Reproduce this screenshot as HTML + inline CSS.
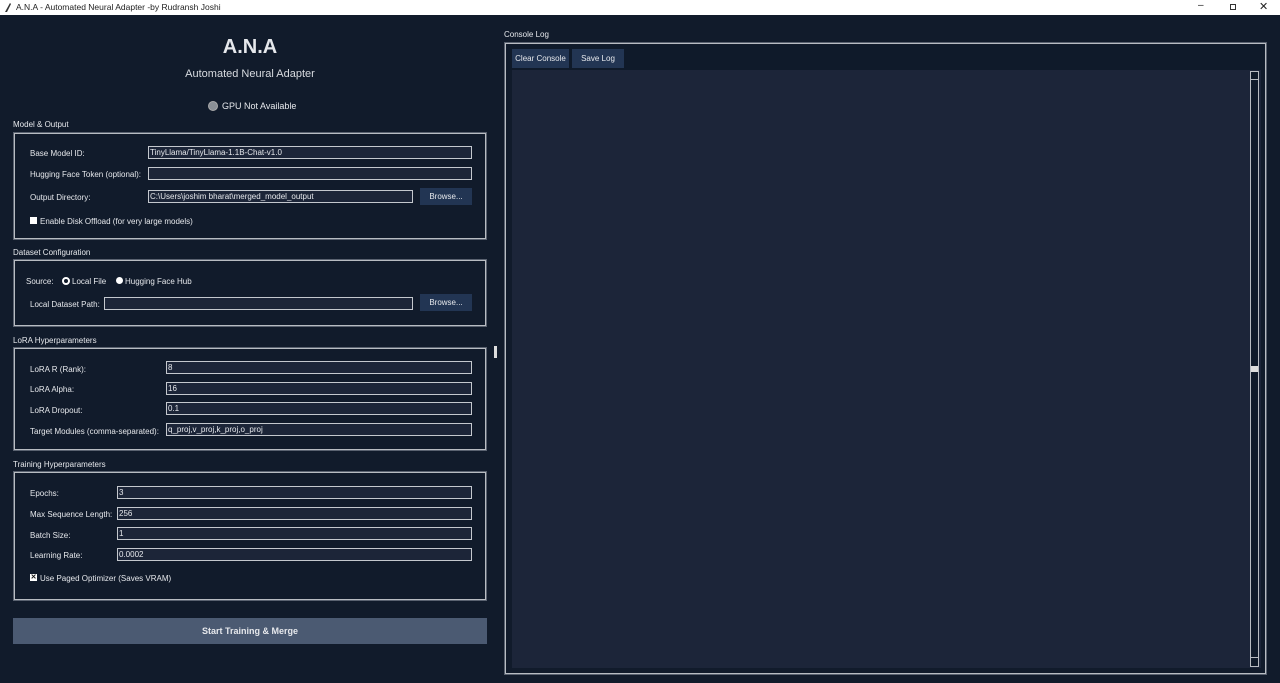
<!DOCTYPE html>
<html><head><meta charset="utf-8"><style>
*{margin:0;padding:0;box-sizing:border-box}
body{width:1280px;height:683px;background:#111b2b;font-family:"Liberation Sans",sans-serif;color:#e6e8ec;position:relative;overflow:hidden;font-size:8.5px}
.a{position:absolute;white-space:nowrap}
.tb{left:0;top:0;width:1280px;height:15px;background:#fff;color:#222;font-size:8.5px}
.fr{position:absolute;border:2px solid #b8bcc2;outline:1px solid #5a6270;outline-offset:-1px}
.en{position:absolute;height:13px;background:#1c2538;border:1.5px solid #c4c8ce;font-size:8px;line-height:11px;padding-left:1px;color:#e6e8ec;white-space:nowrap}
.bt{position:absolute;background:#223553;color:#e6e8ec;text-align:center;font-size:8px}
.lb{position:absolute;white-space:nowrap;font-size:8px}
.hd{position:absolute;white-space:nowrap;font-size:8px}
</style></head><body>
<div class="a tb"><svg style="position:absolute;left:4px;top:2px" width="8" height="11" viewBox="0 0 8 11"><path d="M1 10 L6 1 L7 2 L3 10 Z" fill="#333"/></svg><span style="position:absolute;left:16px;top:2px">A.N.A - Automated Neural Adapter -by Rudransh Joshi</span>
<span style="position:absolute;left:1198px;top:0px;font-size:10px">–</span>
<div style="position:absolute;left:1230px;top:4px;width:6px;height:6px;border:1px solid #333"></div>
<span style="position:absolute;left:1259px;top:0px;font-size:11px">✕</span></div>

<div class="a" style="left:0;width:500px;top:36px;text-align:center;font-size:20px;font-weight:bold">A.N.A</div>
<div class="a" style="left:0;width:500px;top:68px;text-align:center;font-size:11px;color:#d8dbe0">Automated Neural Adapter</div>
<div class="a" style="left:208px;top:101px;width:10px;height:10px;border-radius:50%;background:#8a8f96;border:1px solid #aaa"></div>
<div class="lb" style="left:222px;top:101px;font-size:9px">GPU Not Available</div>

<div class="hd" style="left:13px;top:120px">Model &amp; Output</div>
<div class="fr" style="left:13px;top:132px;width:474px;height:108px"></div>
<div class="lb" style="left:30px;top:149px">Base Model ID:</div>
<div class="en" style="left:148px;top:146px;width:324px">TinyLlama/TinyLlama-1.1B-Chat-v1.0</div>
<div class="lb" style="left:30px;top:170px">Hugging Face Token (optional):</div>
<div class="en" style="left:148px;top:167px;width:324px"></div>
<div class="lb" style="left:30px;top:193px">Output Directory:</div>
<div class="en" style="left:148px;top:190px;width:265px">C:\Users\joshim bharat\merged_model_output</div>
<div class="bt" style="left:420px;top:188px;width:52px;height:17px;line-height:17px">Browse...</div>
<div class="a" style="left:30px;top:217px;width:7px;height:7px;background:#fff"></div>
<div class="lb" style="left:40px;top:217px">Enable Disk Offload (for very large models)</div>

<div class="hd" style="left:13px;top:248px">Dataset Configuration</div>
<div class="fr" style="left:13px;top:259px;width:474px;height:68px"></div>
<div class="lb" style="left:26px;top:277px">Source:</div>
<div class="a" style="left:62px;top:277px;width:8px;height:8px;border-radius:50%;border:2px solid #fff;background:#111b2b"></div>
<div class="lb" style="left:72px;top:277px">Local File</div>
<div class="a" style="left:116px;top:277px;width:7px;height:7px;border-radius:50%;background:#fff"></div>
<div class="lb" style="left:125px;top:277px">Hugging Face Hub</div>
<div class="lb" style="left:30px;top:300px">Local Dataset Path:</div>
<div class="en" style="left:104px;top:297px;width:309px"></div>
<div class="bt" style="left:420px;top:294px;width:52px;height:17px;line-height:17px">Browse...</div>

<div class="hd" style="left:13px;top:336px">LoRA Hyperparameters</div>
<div class="fr" style="left:13px;top:347px;width:474px;height:104px"></div>
<div class="a" style="left:494px;top:346px;width:3px;height:12px;background:#ddd"></div>
<div class="lb" style="left:30px;top:365px">LoRA R (Rank):</div>
<div class="en" style="left:166px;top:361px;width:306px">8</div>
<div class="lb" style="left:30px;top:385px">LoRA Alpha:</div>
<div class="en" style="left:166px;top:382px;width:306px">16</div>
<div class="lb" style="left:30px;top:406px">LoRA Dropout:</div>
<div class="en" style="left:166px;top:402px;width:306px">0.1</div>
<div class="lb" style="left:30px;top:427px">Target Modules (comma-separated):</div>
<div class="en" style="left:166px;top:423px;width:306px">q_proj,v_proj,k_proj,o_proj</div>

<div class="hd" style="left:13px;top:460px">Training Hyperparameters</div>
<div class="fr" style="left:13px;top:471px;width:474px;height:130px"></div>
<div class="lb" style="left:30px;top:489px">Epochs:</div>
<div class="en" style="left:117px;top:486px;width:355px">3</div>
<div class="lb" style="left:30px;top:510px">Max Sequence Length:</div>
<div class="en" style="left:117px;top:507px;width:355px">256</div>
<div class="lb" style="left:30px;top:531px">Batch Size:</div>
<div class="en" style="left:117px;top:527px;width:355px">1</div>
<div class="lb" style="left:30px;top:551px">Learning Rate:</div>
<div class="en" style="left:117px;top:548px;width:355px">0.0002</div>
<div class="a" style="left:30px;top:574px;width:7px;height:7px;background:#fff;color:#111;font-size:7px;line-height:7px;text-align:center;font-weight:bold">✕</div>
<div class="lb" style="left:40px;top:574px">Use Paged Optimizer (Saves VRAM)</div>

<div class="a" style="left:13px;top:618px;width:474px;height:26px;background:#4b5a72;text-align:center;line-height:26px;font-size:9px;font-weight:bold">Start Training &amp; Merge</div>

<div class="hd" style="left:504px;top:30px">Console Log</div>
<div class="fr" style="left:504px;top:42px;width:763px;height:633px"></div>
<div class="a" style="left:507px;top:45px;width:757px;height:25px;background:#0f1a2a"></div>
<div class="bt" style="left:512px;top:49px;width:57px;height:19px;line-height:19px">Clear Console</div>
<div class="bt" style="left:572px;top:49px;width:52px;height:19px;line-height:19px">Save Log</div>
<div class="a" style="left:512px;top:70px;width:749px;height:598px;background:#1c2539"></div>
<div class="a" style="left:1250px;top:71px;width:9px;height:596px;background:#0f1a2a;border:1px solid #b8bcc2"></div>
<div class="a" style="left:1251px;top:72px;width:7px;height:8px;border-bottom:1px solid #b8bcc2"></div>
<div class="a" style="left:1251px;top:366px;width:7px;height:6px;background:#ddd"></div>
<div class="a" style="left:1251px;top:657px;width:7px;height:9px;border-top:1px solid #b8bcc2"></div>
</body></html>
